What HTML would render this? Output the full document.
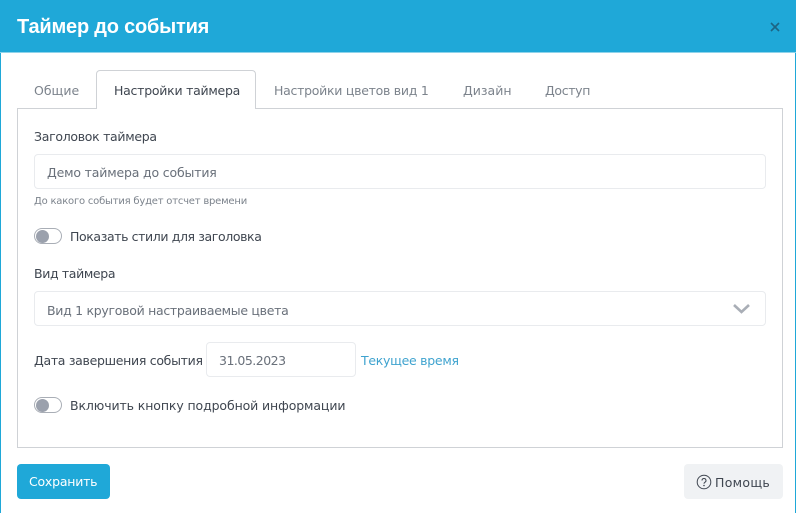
<!DOCTYPE html>
<html lang="ru"><head><meta charset="utf-8"><style>
html,body{margin:0;padding:0;width:796px;height:513px;overflow:hidden;background:#fff}
body{position:relative;font-family:"DejaVu Sans","Liberation Sans",sans-serif;font-size:12.5px;color:#3f4650}
.a{position:absolute;white-space:nowrap;line-height:18px}
.box{position:absolute;box-sizing:border-box;background:#fff}
.input{border:1px solid #e9ebee;border-radius:4px}
.tog{position:absolute;left:34px;width:28px;height:16px;box-sizing:border-box;border:1px solid #a9aeb6;border-radius:8px;background:#fff}
.tog i{position:absolute;left:1px;top:.5px;width:13px;height:13px;border-radius:50%;background:#9ba1ad}
</style></head><body>
<div class="box" style="left:0;top:0;width:796px;height:53px;background:#1fa8d8;border-bottom:1px solid #8fd3ea"></div>
<div class="box" style="left:0;top:53px;width:1px;height:460px;background:#1fa8d8"></div>
<div class="box" style="left:795px;top:53px;width:1px;height:460px;background:#1fa8d8"></div>
<div class="a" style="left:17px;top:13px;font-size:20px;line-height:28px;font-weight:700;color:#fff;font-family:'Liberation Sans',sans-serif;letter-spacing:-.22px">Таймер до события</div>
<svg class="a" style="left:770px;top:22px" width="10" height="10" viewBox="0 0 10 10"><path d="M1 1L9 9M9 1L1 9" stroke="#1d6484" stroke-width="1.6" fill="none"/></svg>

<div class="box" style="left:17px;top:108px;width:766px;height:340px;border:1px solid #cfd2d6"></div>
<div class="box" style="left:96px;top:70px;width:160px;height:39px;border:1px solid #cfd2d6;border-bottom:0;border-radius:4px 4px 0 0"></div>

<div class="a" style="left:34px;top:82px;color:#7c838c">Общие</div>
<div class="a" style="left:114px;top:82px;color:#3f4650;letter-spacing:-.25px">Настройки таймера</div>
<div class="a" style="left:274px;top:82px;color:#7c838c;letter-spacing:-.27px">Настройки цветов вид 1</div>
<div class="a" style="left:463px;top:82px;color:#7c838c">Дизайн</div>
<div class="a" style="left:545px;top:82px;color:#7c838c;letter-spacing:-.35px">Доступ</div>

<div class="a" style="left:34px;top:128px;letter-spacing:-.3px">Заголовок таймера</div>
<div class="box input" style="left:34px;top:154px;width:732px;height:35px"></div>
<div class="a" style="left:47px;top:164px;color:#69707a;letter-spacing:-.17px">Демо таймера до события</div>
<div class="a" style="left:34px;top:193px;font-size:10px;color:#7c838c;letter-spacing:-.21px">До какого события будет отсчет времени</div>

<div class="tog" style="top:228px"><i></i></div>
<div class="a" style="left:70px;top:228px;letter-spacing:-.39px">Показать стили для заголовка</div>

<div class="a" style="left:34px;top:265px;letter-spacing:-.36px">Вид таймера</div>
<div class="box input" style="left:34px;top:291px;width:732px;height:35px"></div>
<div class="a" style="left:47px;top:302px;color:#69707a;letter-spacing:-.29px">Вид 1 круговой настраиваемые цвета</div>
<svg class="a" style="left:732px;top:303px" width="19" height="12" viewBox="0 0 19 12"><path d="M2 2L9.500 9L17 2" stroke="#a9aeb6" stroke-width="2.600" fill="none"/></svg>

<div class="a" style="left:34px;top:352px;letter-spacing:-.3px">Дата завершения события</div>
<div class="box input" style="left:206px;top:342px;width:150px;height:35px"></div>
<div class="a" style="left:219px;top:352px;color:#69707a;letter-spacing:-.5px">31.05.2023</div>
<div class="a" style="left:361px;top:352px;color:#3fa3cf;letter-spacing:-.28px">Текущее время</div>

<div class="tog" style="top:397px"><i></i></div>
<div class="a" style="left:70px;top:397px;letter-spacing:-.11px">Включить кнопку подробной информации</div>

<div class="box" style="left:17px;top:464px;width:93px;height:35px;background:#1fa8d8;border-radius:4px"></div>
<div class="a" style="left:29px;top:473px;color:#fff;letter-spacing:-.22px">Сохранить</div>
<div class="box" style="left:684px;top:464px;width:99px;height:35px;background:#f0f2f4;border-radius:4px"></div>
<svg class="a" style="left:696px;top:474px" width="16" height="16" viewBox="0 0 16 16"><circle cx="8" cy="8" r="6.800" stroke="#3f4650" fill="none"/><path d="M6 6.500a2 2 0 1 1 3 1.700c-.7.400-1 .8-1 1.500" stroke="#3f4650" fill="none"/><circle cx="8" cy="11.500" r=".8" fill="#3f4650"/></svg>
<div class="a" style="left:715px;top:474px;letter-spacing:.3px">Помощь</div>
</body></html>
